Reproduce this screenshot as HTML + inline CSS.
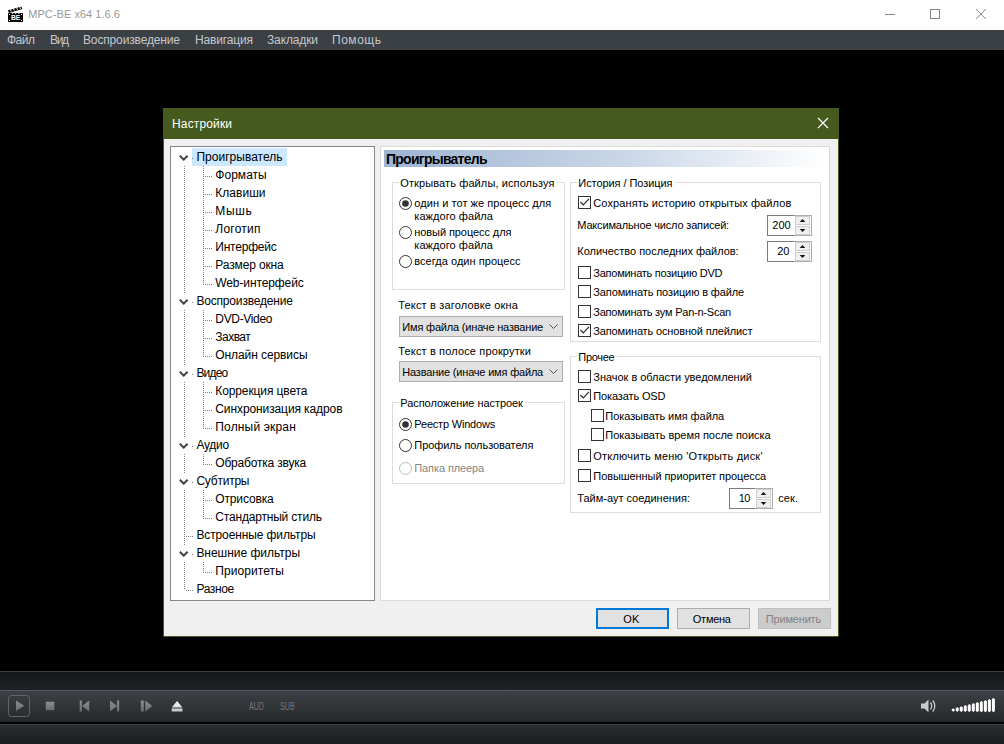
<!DOCTYPE html>
<html lang="ru"><head><meta charset="utf-8"><title>MPC-BE x64 1.6.6</title>
<style>
html,body{margin:0;padding:0;}
body{width:1004px;height:744px;overflow:hidden;background:#000;position:relative;font-family:"Liberation Sans",sans-serif;}
.t{position:absolute;white-space:nowrap;margin:0;padding:0;}
.b{position:absolute;box-sizing:border-box;}
svg{position:absolute;overflow:visible;}
</style></head><body>

<div class="b" style="left:0px;top:0px;width:1004px;height:30px;background:#fff;"></div>
<svg style="left:8px;top:6px" width="16" height="16" viewBox="0 0 16 16">
<rect x="0" y="7" width="15" height="9" rx="0.6" fill="#000"/>
<path d="M0 4.300 L13.400 0.400 L14.300 3.100 L0.900 7 Z" fill="#000"/>
<path d="M3.08 3.09 L2.54 4.81 L3.82 5.27 M6.16 2.20 L5.62 3.92 L6.90 4.38 M9.23 1.30 L8.69 3.02 L9.97 3.48 M12.30 0.41 L11.76 2.13 L13.04 2.59" stroke="#fff" stroke-width="0.800" fill="none"/>
<path d="M3.800 7 h1.600 l-0.800 1.200z M6.900 7 h1.600 l-0.800 1.200z M10 7 h1.600 l-0.800 1.200z" fill="#fff"/>
<rect x="1" y="8" width="1" height="1" fill="#fff"/><rect x="13" y="8" width="1" height="1" fill="#fff"/>
<rect x="1" y="14" width="1" height="1" fill="#fff"/><rect x="13" y="14" width="1" height="1" fill="#fff"/>
<text x="7.600" y="14.200" font-family="Liberation Sans, sans-serif" font-weight="bold" font-size="7" fill="#fff" text-anchor="middle" textLength="9.400" lengthAdjust="spacingAndGlyphs">BE</text>
</svg>
<div class="t" style="left:28.3px;top:8px;font-size:11px;line-height:13px;color:#999;letter-spacing:0.036px;">MPC-BE x64 1.6.6</div>
<svg style="left:880px;top:0" width="124" height="30" viewBox="0 0 124 30">
<path d="M5 14.500 h10" stroke="#858585" stroke-width="1" fill="none"/>
<rect x="50.500" y="9.500" width="9" height="9" stroke="#858585" stroke-width="1" fill="none"/>
<path d="M96 9 l10 10 M106 9 l-10 10" stroke="#8a8a8a" stroke-width="1" fill="none"/>
</svg>
<div class="b" style="left:0px;top:30px;width:1004px;height:20px;background:#3b4045;"></div>
<div class="t" style="left:7px;top:33px;font-size:12px;line-height:14px;color:#c3c7cb;letter-spacing:-0.5px;">Файл</div>
<div class="t" style="left:50px;top:33px;font-size:12px;line-height:14px;color:#c3c7cb;letter-spacing:-1.352px;">Вид</div>
<div class="t" style="left:83px;top:33px;font-size:12px;line-height:14px;color:#c3c7cb;letter-spacing:-0.145px;">Воспроизведение</div>
<div class="t" style="left:195px;top:33px;font-size:12px;line-height:14px;color:#c3c7cb;letter-spacing:-0.16px;">Навигация</div>
<div class="t" style="left:267px;top:33px;font-size:12px;line-height:14px;color:#c3c7cb;letter-spacing:-0.134px;">Закладки</div>
<div class="t" style="left:332px;top:33px;font-size:12px;line-height:14px;color:#c3c7cb;letter-spacing:0.531px;">Помощь</div>
<div class="b" style="left:0px;top:671px;width:1004px;height:1px;background:#3a3f44;"></div>
<div class="b" style="left:0px;top:672px;width:1004px;height:18px;background:linear-gradient(#14171a,#1e2125);"></div>
<div class="b" style="left:0px;top:690px;width:1004px;height:1px;background:#55595d;"></div>
<div class="b" style="left:0px;top:691px;width:1004px;height:31px;background:linear-gradient(#3c4044,#25282b);"></div>
<div class="b" style="left:0px;top:722px;width:1004px;height:2px;background:#000;"></div>
<div class="b" style="left:0px;top:724px;width:1004px;height:1px;background:#3a3e42;"></div>
<div class="b" style="left:0px;top:725px;width:1004px;height:19px;background:linear-gradient(#2a2d31,#1b1e21);"></div>
<svg style="left:0;top:690px" width="1004" height="34" viewBox="0 0 1004 34">
<defs><linearGradient id="ig" x1="0" y1="0" x2="0" y2="1"><stop offset="0" stop-color="#8e8e8e"/><stop offset="1" stop-color="#6c6c6c"/></linearGradient>
<linearGradient id="eg" x1="0" y1="0" x2="0" y2="1"><stop offset="0" stop-color="#ffffff"/><stop offset="1" stop-color="#c4c4c4"/></linearGradient></defs>
<rect x="8.500" y="5.500" width="21" height="21" rx="3" ry="3" fill="none" stroke="#62666a" stroke-width="1"/>
<path d="M16 10.500 L24.200 15.800 L16 21.100 Z" fill="url(#ig)"/>
<rect x="45.800" y="11.700" width="8.500" height="8.500" fill="url(#ig)"/>
<path d="M79.700 10.500 h2.200 v10.900 h-2.200z M89.200 10.500 v10.900 l-7.200 -5.450z" fill="url(#ig)"/>
<path d="M117 10.500 h2.200 v10.900 h-2.200z M110 10.500 v10.900 l7.200 -5.450z" fill="url(#ig)"/>
<path d="M140.800 10.500 h3 v10.900 h-3z M145.300 10.500 v10.900 l7 -5.450z" fill="url(#ig)"/>
<path d="M171.700 17.400 h10.800 l-5.400 -6.400z M171.700 18.400 h10.800 v3 h-10.800z" fill="url(#eg)"/>
</svg>
<div class="t" style="left:248.5px;top:701px;font-size:10px;line-height:12px;color:#74787c;transform:scaleX(0.7);transform-origin:0 0;">AUD</div>
<div class="t" style="left:279.5px;top:701px;font-size:10px;line-height:12px;color:#74787c;transform:scaleX(0.72);transform-origin:0 0;">SUB</div>
<svg style="left:915px;top:690px" width="89" height="34" viewBox="0 0 89 34">
<path d="M6 13.500 h3.500 l4 -4 v13 l-4 -4 h-3.500z" fill="#c8c8c8"/>
<path d="M15.500 12.500 q2.500 3.500 0 7 M17.800 10.500 q4 5.500 0 11" stroke="#c8c8c8" stroke-width="1.300" fill="none"/>
</svg>
<svg style="left:0;top:0" width="1004" height="744" viewBox="0 0 1004 744"><path d="M951.70 709.40 L953.20 708.20 L954.70 709.40 L954.70 710.60 L953.20 711.80 L951.70 710.60z" fill="#fff"/><path d="M955.72 708.37 L957.22 707.17 L958.72 708.37 L958.72 710.65 L957.22 711.85 L955.72 710.65z" fill="#fff"/><path d="M959.74 707.34 L961.24 706.14 L962.74 707.34 L962.74 710.70 L961.24 711.90 L959.74 710.70z" fill="#fff"/><path d="M963.76 706.31 L965.26 705.11 L966.76 706.31 L966.76 710.75 L965.26 711.95 L963.76 710.75z" fill="#fff"/><path d="M967.78 705.28 L969.28 704.08 L970.78 705.28 L970.78 710.80 L969.28 712.00 L967.78 710.80z" fill="#fff"/><path d="M971.80 704.25 L973.30 703.05 L974.80 704.25 L974.80 710.85 L973.30 712.05 L971.80 710.85z" fill="#fff"/><path d="M975.82 703.22 L977.32 702.02 L978.82 703.22 L978.82 710.90 L977.32 712.10 L975.82 710.90z" fill="#fff"/><path d="M979.84 702.19 L981.34 700.99 L982.84 702.19 L982.84 710.95 L981.34 712.15 L979.84 710.95z" fill="#fff"/><path d="M983.86 701.16 L985.36 699.96 L986.86 701.16 L986.86 711.00 L985.36 712.20 L983.86 711.00z" fill="#fff"/><path d="M987.88 700.13 L989.38 698.93 L990.88 700.13 L990.88 711.05 L989.38 712.25 L987.88 711.05z" fill="#fff"/><path d="M991.90 699.10 L993.40 697.90 L994.90 699.10 L994.90 711.10 L993.40 712.30 L991.90 711.10z" fill="#fff"/></svg>
<div class="b" style="left:163px;top:108px;width:676px;height:529px;background:#f0f0f0;border:1px solid #475a1e;border-top:none;"></div>
<div class="b" style="left:163px;top:108px;width:676px;height:31px;background:#475a1e;"></div>
<div class="t" style="left:172px;top:117px;font-size:12px;line-height:14px;color:#fff;letter-spacing:0.145px;">Настройки</div>
<svg style="left:817px;top:117px" width="12" height="12" viewBox="0 0 12 12"><path d="M1 1 L11 11 M11 1 L1 11" stroke="#fff" stroke-width="1.200" fill="none"/></svg>
<div class="b" style="left:170px;top:146px;width:205px;height:455px;background:#fff;border:1px solid #828790;"></div>
<div class="b" style="left:192px;top:148px;width:95px;height:18px;background:#cce8ff;"></div>
<div class="b" style="left:184px;top:166px;width:1px;height:424px;background:repeating-linear-gradient(to bottom,#808080 0,#808080 1px,transparent 1px,transparent 2px);"></div>
<div class="t" style="left:196.4px;top:148px;font-size:12px;line-height:18px;color:#000;letter-spacing:0.019px;">Проигрыватель</div>
<div class="b" style="left:180px;top:149px;width:10px;height:17px;background:#fff;"></div>
<svg style="left:179px;top:154px" width="10" height="8" viewBox="0 0 10 8"><path d="M0.800 1.800 L4.700 5.700 L8.600 1.800" stroke="#404040" stroke-width="2" fill="none"/></svg>
<div class="b" style="left:192px;top:158px;width:1px;height:1px;background:#808080;"></div>
<div class="b" style="left:203px;top:166px;width:1px;height:119px;background:repeating-linear-gradient(to bottom,#808080 0,#808080 1px,transparent 1px,transparent 2px);"></div>
<div class="b" style="left:205px;top:176px;width:7px;height:1px;background:repeating-linear-gradient(to right,#808080 0,#808080 1px,transparent 1px,transparent 2px);"></div>
<div class="b" style="left:205px;top:194px;width:7px;height:1px;background:repeating-linear-gradient(to right,#808080 0,#808080 1px,transparent 1px,transparent 2px);"></div>
<div class="b" style="left:205px;top:212px;width:7px;height:1px;background:repeating-linear-gradient(to right,#808080 0,#808080 1px,transparent 1px,transparent 2px);"></div>
<div class="b" style="left:205px;top:230px;width:7px;height:1px;background:repeating-linear-gradient(to right,#808080 0,#808080 1px,transparent 1px,transparent 2px);"></div>
<div class="b" style="left:205px;top:248px;width:7px;height:1px;background:repeating-linear-gradient(to right,#808080 0,#808080 1px,transparent 1px,transparent 2px);"></div>
<div class="b" style="left:205px;top:266px;width:7px;height:1px;background:repeating-linear-gradient(to right,#808080 0,#808080 1px,transparent 1px,transparent 2px);"></div>
<div class="b" style="left:205px;top:284px;width:7px;height:1px;background:repeating-linear-gradient(to right,#808080 0,#808080 1px,transparent 1px,transparent 2px);"></div>
<div class="t" style="left:215.3px;top:166px;font-size:12px;line-height:18px;color:#000;letter-spacing:0.033px;">Форматы</div>
<div class="t" style="left:215.3px;top:184px;font-size:12px;line-height:18px;color:#000;letter-spacing:0.023px;">Клавиши</div>
<div class="t" style="left:215.3px;top:202px;font-size:12px;line-height:18px;color:#000;letter-spacing:0.65px;">Мышь</div>
<div class="t" style="left:215.3px;top:220px;font-size:12px;line-height:18px;color:#000;letter-spacing:0.239px;">Логотип</div>
<div class="t" style="left:215.3px;top:238px;font-size:12px;line-height:18px;color:#000;letter-spacing:-0.219px;">Интерфейс</div>
<div class="t" style="left:215.3px;top:256px;font-size:12px;line-height:18px;color:#000;letter-spacing:-0.133px;">Размер окна</div>
<div class="t" style="left:215.3px;top:274px;font-size:12px;line-height:18px;color:#000;letter-spacing:-0.107px;">Web-интерфейс</div>
<div class="t" style="left:196.4px;top:292px;font-size:12px;line-height:18px;color:#000;letter-spacing:-0.174px;">Воспроизведение</div>
<div class="b" style="left:180px;top:293px;width:10px;height:17px;background:#fff;"></div>
<svg style="left:179px;top:298px" width="10" height="8" viewBox="0 0 10 8"><path d="M0.800 1.800 L4.700 5.700 L8.600 1.800" stroke="#404040" stroke-width="2" fill="none"/></svg>
<div class="b" style="left:192px;top:302px;width:1px;height:1px;background:#808080;"></div>
<div class="b" style="left:203px;top:310px;width:1px;height:47px;background:repeating-linear-gradient(to bottom,#808080 0,#808080 1px,transparent 1px,transparent 2px);"></div>
<div class="b" style="left:205px;top:320px;width:7px;height:1px;background:repeating-linear-gradient(to right,#808080 0,#808080 1px,transparent 1px,transparent 2px);"></div>
<div class="b" style="left:205px;top:338px;width:7px;height:1px;background:repeating-linear-gradient(to right,#808080 0,#808080 1px,transparent 1px,transparent 2px);"></div>
<div class="b" style="left:205px;top:356px;width:7px;height:1px;background:repeating-linear-gradient(to right,#808080 0,#808080 1px,transparent 1px,transparent 2px);"></div>
<div class="t" style="left:215.3px;top:310px;font-size:12px;line-height:18px;color:#000;letter-spacing:-0.327px;">DVD-Video</div>
<div class="t" style="left:215.3px;top:328px;font-size:12px;line-height:18px;color:#000;letter-spacing:-0.523px;">Захват</div>
<div class="t" style="left:215.3px;top:346px;font-size:12px;line-height:18px;color:#000;letter-spacing:-0.087px;">Онлайн сервисы</div>
<div class="t" style="left:196.4px;top:364px;font-size:12px;line-height:18px;color:#000;letter-spacing:-0.799px;">Видео</div>
<div class="b" style="left:180px;top:365px;width:10px;height:17px;background:#fff;"></div>
<svg style="left:179px;top:370px" width="10" height="8" viewBox="0 0 10 8"><path d="M0.800 1.800 L4.700 5.700 L8.600 1.800" stroke="#404040" stroke-width="2" fill="none"/></svg>
<div class="b" style="left:192px;top:374px;width:1px;height:1px;background:#808080;"></div>
<div class="b" style="left:203px;top:382px;width:1px;height:47px;background:repeating-linear-gradient(to bottom,#808080 0,#808080 1px,transparent 1px,transparent 2px);"></div>
<div class="b" style="left:205px;top:392px;width:7px;height:1px;background:repeating-linear-gradient(to right,#808080 0,#808080 1px,transparent 1px,transparent 2px);"></div>
<div class="b" style="left:205px;top:410px;width:7px;height:1px;background:repeating-linear-gradient(to right,#808080 0,#808080 1px,transparent 1px,transparent 2px);"></div>
<div class="b" style="left:205px;top:428px;width:7px;height:1px;background:repeating-linear-gradient(to right,#808080 0,#808080 1px,transparent 1px,transparent 2px);"></div>
<div class="t" style="left:215.3px;top:382px;font-size:12px;line-height:18px;color:#000;letter-spacing:-0.111px;">Коррекция цвета</div>
<div class="t" style="left:215.3px;top:400px;font-size:12px;line-height:18px;color:#000;letter-spacing:-0.103px;">Синхронизация кадров</div>
<div class="t" style="left:215.3px;top:418px;font-size:12px;line-height:18px;color:#000;letter-spacing:0.163px;">Полный экран</div>
<div class="t" style="left:196.4px;top:436px;font-size:12px;line-height:18px;color:#000;letter-spacing:-0.248px;">Аудио</div>
<div class="b" style="left:180px;top:437px;width:10px;height:17px;background:#fff;"></div>
<svg style="left:179px;top:442px" width="10" height="8" viewBox="0 0 10 8"><path d="M0.800 1.800 L4.700 5.700 L8.600 1.800" stroke="#404040" stroke-width="2" fill="none"/></svg>
<div class="b" style="left:192px;top:446px;width:1px;height:1px;background:#808080;"></div>
<div class="b" style="left:203px;top:454px;width:1px;height:11px;background:repeating-linear-gradient(to bottom,#808080 0,#808080 1px,transparent 1px,transparent 2px);"></div>
<div class="b" style="left:205px;top:464px;width:7px;height:1px;background:repeating-linear-gradient(to right,#808080 0,#808080 1px,transparent 1px,transparent 2px);"></div>
<div class="t" style="left:215.3px;top:454px;font-size:12px;line-height:18px;color:#000;letter-spacing:-0.192px;">Обработка звука</div>
<div class="t" style="left:196.4px;top:472px;font-size:12px;line-height:18px;color:#000;letter-spacing:-0.227px;">Субтитры</div>
<div class="b" style="left:180px;top:473px;width:10px;height:17px;background:#fff;"></div>
<svg style="left:179px;top:478px" width="10" height="8" viewBox="0 0 10 8"><path d="M0.800 1.800 L4.700 5.700 L8.600 1.800" stroke="#404040" stroke-width="2" fill="none"/></svg>
<div class="b" style="left:192px;top:482px;width:1px;height:1px;background:#808080;"></div>
<div class="b" style="left:203px;top:490px;width:1px;height:29px;background:repeating-linear-gradient(to bottom,#808080 0,#808080 1px,transparent 1px,transparent 2px);"></div>
<div class="b" style="left:205px;top:500px;width:7px;height:1px;background:repeating-linear-gradient(to right,#808080 0,#808080 1px,transparent 1px,transparent 2px);"></div>
<div class="b" style="left:205px;top:518px;width:7px;height:1px;background:repeating-linear-gradient(to right,#808080 0,#808080 1px,transparent 1px,transparent 2px);"></div>
<div class="t" style="left:215.3px;top:490px;font-size:12px;line-height:18px;color:#000;letter-spacing:-0.147px;">Отрисовка</div>
<div class="t" style="left:215.3px;top:508px;font-size:12px;line-height:18px;color:#000;letter-spacing:-0.184px;">Стандартный стиль</div>
<div class="t" style="left:196.4px;top:526px;font-size:12px;line-height:18px;color:#000;letter-spacing:-0.11px;">Встроенные фильтры</div>
<div class="b" style="left:186px;top:536px;width:7px;height:1px;background:repeating-linear-gradient(to right,#808080 0,#808080 1px,transparent 1px,transparent 2px);"></div>
<div class="t" style="left:196.4px;top:544px;font-size:12px;line-height:18px;color:#000;letter-spacing:-0.024px;">Внешние фильтры</div>
<div class="b" style="left:180px;top:545px;width:10px;height:17px;background:#fff;"></div>
<svg style="left:179px;top:550px" width="10" height="8" viewBox="0 0 10 8"><path d="M0.800 1.800 L4.700 5.700 L8.600 1.800" stroke="#404040" stroke-width="2" fill="none"/></svg>
<div class="b" style="left:192px;top:554px;width:1px;height:1px;background:#808080;"></div>
<div class="b" style="left:203px;top:562px;width:1px;height:11px;background:repeating-linear-gradient(to bottom,#808080 0,#808080 1px,transparent 1px,transparent 2px);"></div>
<div class="b" style="left:205px;top:572px;width:7px;height:1px;background:repeating-linear-gradient(to right,#808080 0,#808080 1px,transparent 1px,transparent 2px);"></div>
<div class="t" style="left:215.3px;top:562px;font-size:12px;line-height:18px;color:#000;letter-spacing:0.076px;">Приоритеты</div>
<div class="t" style="left:196.4px;top:580px;font-size:12px;line-height:18px;color:#000;letter-spacing:-0.362px;">Разное</div>
<div class="b" style="left:186px;top:590px;width:7px;height:1px;background:repeating-linear-gradient(to right,#808080 0,#808080 1px,transparent 1px,transparent 2px);"></div>
<div class="b" style="left:380px;top:146px;width:450px;height:455px;background:#fff;border:1px solid #dcdcdc;"></div>
<div class="b" style="left:384px;top:150px;width:442px;height:17px;background:linear-gradient(to right,#9eb4d2 0%,#aabed8 15%,#cad7e8 55%,#ffffff 100%);"></div>
<div class="t" style="left:386px;top:151px;font-size:14px;line-height:16px;color:#000;letter-spacing:-0.745px;font-weight:bold;">Проигрыватель</div>
<div class="b" style="left:392px;top:182px;width:173px;height:108px;border:1px solid #dcdcdc;"></div>
<div class="b" style="left:399px;top:180px;width:157.5px;height:5px;background:#fff;"></div>
<div class="t" style="left:400.3px;top:177px;font-size:11px;line-height:13px;color:#000;letter-spacing:0.107px;">Открывать файлы, используя</div>
<div class="b" style="left:392px;top:402px;width:173px;height:82px;border:1px solid #dcdcdc;"></div>
<div class="b" style="left:399px;top:400px;width:126px;height:5px;background:#fff;"></div>
<div class="t" style="left:400.3px;top:397px;font-size:11px;line-height:13px;color:#000;letter-spacing:-0.056px;">Расположение настроек</div>
<div class="b" style="left:570px;top:182px;width:251px;height:160px;border:1px solid #dcdcdc;"></div>
<div class="b" style="left:577px;top:180px;width:97.5px;height:5px;background:#fff;"></div>
<div class="t" style="left:578.3px;top:177px;font-size:11px;line-height:13px;color:#000;letter-spacing:-0.071px;">История / Позиция</div>
<div class="b" style="left:570px;top:356px;width:251px;height:157px;border:1px solid #dcdcdc;"></div>
<div class="b" style="left:577px;top:354px;width:39.75px;height:5px;background:#fff;"></div>
<div class="t" style="left:578.3px;top:351px;font-size:11px;line-height:13px;color:#000;letter-spacing:-0.291px;">Прочее</div>
<svg style="left:399px;top:197px" width="13" height="13" viewBox="0 0 13 13"><circle cx="6.500" cy="6.500" r="6" fill="#fff" stroke="#333" stroke-width="1"/><circle cx="6.500" cy="6.500" r="3.300" fill="#333"/></svg>
<div class="t" style="left:414.3px;top:197px;font-size:11px;line-height:13px;color:#000;letter-spacing:0.059px;">один и тот же процесс для</div>
<div class="t" style="left:414.3px;top:210px;font-size:11px;line-height:13px;color:#000;letter-spacing:0.066px;">каждого файла</div>
<svg style="left:399px;top:226px" width="13" height="13" viewBox="0 0 13 13"><circle cx="6.500" cy="6.500" r="6" fill="#fff" stroke="#333" stroke-width="1"/></svg>
<div class="t" style="left:414.3px;top:226px;font-size:11px;line-height:13px;color:#000;letter-spacing:-0.082px;">новый процесс для</div>
<div class="t" style="left:414.3px;top:239px;font-size:11px;line-height:13px;color:#000;letter-spacing:0.066px;">каждого файла</div>
<svg style="left:399px;top:255px" width="13" height="13" viewBox="0 0 13 13"><circle cx="6.500" cy="6.500" r="6" fill="#fff" stroke="#333" stroke-width="1"/></svg>
<div class="t" style="left:414.3px;top:255px;font-size:11px;line-height:13px;color:#000;letter-spacing:0.035px;">всегда один процесс</div>
<div class="t" style="left:398.3px;top:299px;font-size:11px;line-height:13px;color:#000;letter-spacing:0.163px;">Текст в заголовке окна</div>
<div class="b" style="left:399px;top:316px;width:164px;height:21px;background:#e1e1e1;border:1px solid #adadad;"></div>
<div class="t" style="left:402.3px;top:321px;font-size:11px;line-height:13px;color:#000;letter-spacing:-0.184px;">Имя файла (иначе название</div>
<svg style="left:549px;top:324px" width="10" height="6" viewBox="0 0 10 6"><path d="M0.500 0.500 L4.500 4.500 L8.500 0.500" stroke="#555" stroke-width="1" fill="none"/></svg>
<div class="t" style="left:398.3px;top:345px;font-size:11px;line-height:13px;color:#000;letter-spacing:0.145px;">Текст в полосе прокрутки</div>
<div class="b" style="left:399px;top:361px;width:164px;height:21px;background:#e1e1e1;border:1px solid #adadad;"></div>
<div class="t" style="left:402.3px;top:366px;font-size:11px;line-height:13px;color:#000;letter-spacing:-0.188px;">Название (иначе имя файла</div>
<svg style="left:549px;top:369px" width="10" height="6" viewBox="0 0 10 6"><path d="M0.500 0.500 L4.500 4.500 L8.500 0.500" stroke="#555" stroke-width="1" fill="none"/></svg>
<svg style="left:399px;top:418px" width="13" height="13" viewBox="0 0 13 13"><circle cx="6.500" cy="6.500" r="6" fill="#fff" stroke="#333" stroke-width="1"/><circle cx="6.500" cy="6.500" r="3.300" fill="#333"/></svg>
<div class="t" style="left:414.3px;top:418px;font-size:11px;line-height:13px;color:#000;letter-spacing:-0.193px;">Реестр Windows</div>
<svg style="left:399px;top:439px" width="13" height="13" viewBox="0 0 13 13"><circle cx="6.500" cy="6.500" r="6" fill="#fff" stroke="#333" stroke-width="1"/></svg>
<div class="t" style="left:414.3px;top:439px;font-size:11px;line-height:13px;color:#000;letter-spacing:-0.056px;">Профиль пользователя</div>
<svg style="left:399px;top:462px" width="13" height="13" viewBox="0 0 13 13"><circle cx="6.500" cy="6.500" r="6" fill="#fff" stroke="#bcbcbc" stroke-width="1"/></svg>
<div class="t" style="left:414.3px;top:462px;font-size:11px;line-height:13px;color:#858585;letter-spacing:-0.104px;">Папка плеера</div>
<svg style="left:578px;top:196px" width="13" height="13" viewBox="0 0 13 13"><rect x="0.500" y="0.500" width="12" height="12" fill="#fff" stroke="#333" stroke-width="1"/><path d="M2.400 6 L5.300 9 L11 2.800" stroke="#2a2a2a" stroke-width="1.150" fill="none"/></svg>
<div class="t" style="left:593.3px;top:197px;font-size:11px;line-height:13px;color:#000;letter-spacing:0.097px;">Сохранять историю открытых файлов</div>
<div class="t" style="left:577.3px;top:219px;font-size:11px;line-height:13px;color:#000;letter-spacing:-0.172px;">Максимальное число записей:</div>
<div class="t" style="left:577.3px;top:245px;font-size:11px;line-height:13px;color:#000;letter-spacing:-0.026px;">Количество последних файлов:</div>
<div class="b" style="left:767px;top:215px;width:45px;height:21px;background:#fff;border:1px solid #adadad;"></div>
<div class="b" style="left:767px;top:215px;width:27px;height:21px;border:1px solid #7a7a7a;border-right:none;"></div>
<div class="t" style="left:772.3px;top:219px;font-size:11px;line-height:13px;color:#000;letter-spacing:0.038px;">200</div>
<div class="b" style="left:795px;top:216px;width:15px;height:9px;background:#f0f0f0;border:1px solid #cdcdcd;"></div>
<div class="b" style="left:795px;top:226px;width:15px;height:9px;background:#f0f0f0;border:1px solid #cdcdcd;"></div>
<svg style="left:800px;top:219px" width="5" height="3" viewBox="0 0 5 3"><path d="M-0.300 3 L2.500 0 L5.300 3z" fill="#111"/></svg>
<svg style="left:800px;top:229px" width="5" height="3" viewBox="0 0 5 3"><path d="M-0.300 0 L2.500 3 L5.300 0z" fill="#111"/></svg>
<div class="b" style="left:767px;top:241px;width:45px;height:21px;background:#fff;border:1px solid #adadad;"></div>
<div class="b" style="left:767px;top:241px;width:27px;height:21px;border:1px solid #7a7a7a;border-right:none;"></div>
<div class="t" style="left:777.3px;top:245px;font-size:11px;line-height:13px;color:#000;letter-spacing:-0.05px;">20</div>
<div class="b" style="left:795px;top:242px;width:15px;height:9px;background:#f0f0f0;border:1px solid #cdcdcd;"></div>
<div class="b" style="left:795px;top:252px;width:15px;height:9px;background:#f0f0f0;border:1px solid #cdcdcd;"></div>
<svg style="left:800px;top:245px" width="5" height="3" viewBox="0 0 5 3"><path d="M-0.300 3 L2.500 0 L5.300 3z" fill="#111"/></svg>
<svg style="left:800px;top:255px" width="5" height="3" viewBox="0 0 5 3"><path d="M-0.300 0 L2.500 3 L5.300 0z" fill="#111"/></svg>
<svg style="left:578px;top:266px" width="13" height="13" viewBox="0 0 13 13"><rect x="0.500" y="0.500" width="12" height="12" fill="#fff" stroke="#333" stroke-width="1"/></svg>
<div class="t" style="left:593.3px;top:267px;font-size:11px;line-height:13px;color:#000;letter-spacing:-0.25px;">Запоминать позицию DVD</div>
<svg style="left:578px;top:285px" width="13" height="13" viewBox="0 0 13 13"><rect x="0.500" y="0.500" width="12" height="12" fill="#fff" stroke="#333" stroke-width="1"/></svg>
<div class="t" style="left:593.3px;top:286px;font-size:11px;line-height:13px;color:#000;letter-spacing:-0.122px;">Запоминать позицию в файле</div>
<svg style="left:578px;top:305px" width="13" height="13" viewBox="0 0 13 13"><rect x="0.500" y="0.500" width="12" height="12" fill="#fff" stroke="#333" stroke-width="1"/></svg>
<div class="t" style="left:593.3px;top:306px;font-size:11px;line-height:13px;color:#000;letter-spacing:-0.227px;">Запоминать зум Pan-n-Scan</div>
<svg style="left:578px;top:324px" width="13" height="13" viewBox="0 0 13 13"><rect x="0.500" y="0.500" width="12" height="12" fill="#fff" stroke="#333" stroke-width="1"/><path d="M2.400 6 L5.300 9 L11 2.800" stroke="#2a2a2a" stroke-width="1.150" fill="none"/></svg>
<div class="t" style="left:593.3px;top:325px;font-size:11px;line-height:13px;color:#000;letter-spacing:-0.147px;">Запоминать основной плейлист</div>
<svg style="left:578px;top:370px" width="13" height="13" viewBox="0 0 13 13"><rect x="0.500" y="0.500" width="12" height="12" fill="#fff" stroke="#333" stroke-width="1"/></svg>
<div class="t" style="left:593.3px;top:371px;font-size:11px;line-height:13px;color:#000;letter-spacing:-0.033px;">Значок в области уведомлений</div>
<svg style="left:578px;top:389px" width="13" height="13" viewBox="0 0 13 13"><rect x="0.500" y="0.500" width="12" height="12" fill="#fff" stroke="#333" stroke-width="1"/><path d="M2.400 6 L5.300 9 L11 2.800" stroke="#2a2a2a" stroke-width="1.150" fill="none"/></svg>
<div class="t" style="left:593.3px;top:390px;font-size:11px;line-height:13px;color:#000;letter-spacing:-0.135px;">Показать OSD</div>
<svg style="left:591px;top:409px" width="13" height="13" viewBox="0 0 13 13"><rect x="0.500" y="0.500" width="12" height="12" fill="#fff" stroke="#333" stroke-width="1"/></svg>
<div class="t" style="left:605.3px;top:410px;font-size:11px;line-height:13px;color:#000;letter-spacing:-0.058px;">Показывать имя файла</div>
<svg style="left:591px;top:428px" width="13" height="13" viewBox="0 0 13 13"><rect x="0.500" y="0.500" width="12" height="12" fill="#fff" stroke="#333" stroke-width="1"/></svg>
<div class="t" style="left:605.3px;top:429px;font-size:11px;line-height:13px;color:#000;letter-spacing:-0.027px;">Показывать время после поиска</div>
<svg style="left:578px;top:449px" width="13" height="13" viewBox="0 0 13 13"><rect x="0.500" y="0.500" width="12" height="12" fill="#fff" stroke="#333" stroke-width="1"/></svg>
<div class="t" style="left:593.3px;top:450px;font-size:11px;line-height:13px;color:#000;letter-spacing:0.219px;">Отключить меню 'Открыть диск'</div>
<svg style="left:578px;top:469px" width="13" height="13" viewBox="0 0 13 13"><rect x="0.500" y="0.500" width="12" height="12" fill="#fff" stroke="#333" stroke-width="1"/></svg>
<div class="t" style="left:593.3px;top:470px;font-size:11px;line-height:13px;color:#000;letter-spacing:-0.073px;">Повышенный приоритет процесса</div>
<div class="t" style="left:577.3px;top:492px;font-size:11px;line-height:13px;color:#000;letter-spacing:-0.012px;">Тайм-аут соединения:</div>
<div class="b" style="left:729px;top:488px;width:44px;height:21px;background:#fff;border:1px solid #adadad;"></div>
<div class="b" style="left:729px;top:488px;width:26px;height:21px;border:1px solid #7a7a7a;border-right:none;"></div>
<div class="t" style="left:738.8px;top:492px;font-size:11px;line-height:13px;color:#000;letter-spacing:-0.55px;">10</div>
<div class="b" style="left:756px;top:489px;width:15px;height:9px;background:#f0f0f0;border:1px solid #cdcdcd;"></div>
<div class="b" style="left:756px;top:499px;width:15px;height:9px;background:#f0f0f0;border:1px solid #cdcdcd;"></div>
<svg style="left:761px;top:492px" width="5" height="3" viewBox="0 0 5 3"><path d="M-0.300 3 L2.500 0 L5.300 3z" fill="#111"/></svg>
<svg style="left:761px;top:502px" width="5" height="3" viewBox="0 0 5 3"><path d="M-0.300 0 L2.500 3 L5.300 0z" fill="#111"/></svg>
<div class="t" style="left:778.3px;top:492px;font-size:11px;line-height:13px;color:#000;letter-spacing:0.067px;">сек.</div>
<div class="b" style="left:596px;top:608px;width:73px;height:21px;background:#e1e1e1;border:2px solid #0078d7;"></div>
<div class="t" style="left:623.3px;top:613px;font-size:11px;line-height:13px;color:#000;letter-spacing:0.094px;">OK</div>
<div class="b" style="left:677px;top:608px;width:73px;height:21px;background:#e1e1e1;border:1px solid #adadad;"></div>
<div class="t" style="left:692.8px;top:613px;font-size:11px;line-height:13px;color:#000;letter-spacing:-0.257px;">Отмена</div>
<div class="b" style="left:758px;top:608px;width:73px;height:21px;background:#cccccc;border:1px solid #bfbfbf;"></div>
<div class="t" style="left:765.8px;top:613px;font-size:11px;line-height:13px;color:#838383;letter-spacing:-0.18px;">Применить</div>
</body></html>
